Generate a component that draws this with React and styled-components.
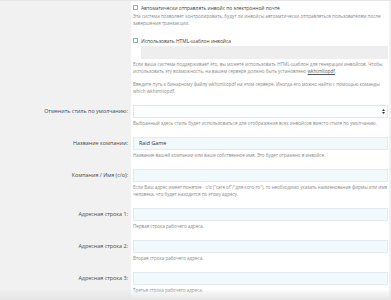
import React from "react";
import styled, { createGlobalStyle } from "styled-components";

const Global = createGlobalStyle`
  html, body { margin: 0; padding: 0; background: #f1f1f1; }
  body { font-family: "Open Sans", "Liberation Sans", sans-serif; overflow: hidden; }
  #root { height: 300px; overflow: hidden; }
`;

const Page = styled.div`
  height: 300px;
  border-top: 1.5px solid #e6e6e6;
  box-sizing: border-box;
  overflow: hidden;
  padding-right: 2px;
`;

const Form = styled.div`
  display: grid;
  grid-template-columns: 131px 1fr;
`;

const LabelCell = styled.div`
  background: #f1f1f1;
  padding-right: 3px;
  text-align: right;
  font-size: 5.4px;
  line-height: 13px;
  color: #4a4a4a;
  white-space: nowrap;
`;

const FieldCell = styled.div`
  background: #fff;
  padding: ${(p) => (p.$first ? "3px" : "0")} 1px 10.5px 2px;
  min-width: 0;
`;

const CheckLine = styled.label`
  display: flex;
  align-items: center;
  gap: 3px;
  height: 7px;
  font-size: 4.9px;
  color: #3c3c3c;
  margin-top: ${(p) => p.$mt || 0}px;
  white-space: nowrap;
`;

const Box = styled.span`
  width: 5px;
  height: 5px;
  box-sizing: border-box;
  border: 0.8px solid #8fb3c0;
  background: #fff;
  flex: none;
`;

const Help = styled.p`
  margin: ${(p) => p.$mt ?? 2}px 0 0 0;
  font-size: 4.58px;
  line-height: 6.7px;
  color: #8a8a8a;
`;

const HelpLine = styled.span`
  display: block;
  white-space: nowrap;
  letter-spacing: -0.04px;
`;

const Link = styled.span`
  color: #555;
  text-decoration: underline;
`;

const Disabled = styled.div`
  margin: 1.5px 0 0 8px;
  height: 13px;
  background: #eeeeee;
`;

const Input = styled.div`
  height: 13px;
  box-sizing: border-box;
  background: #f2f9fc;
  border: 0.6px solid #e3ebef;
  display: flex;
  align-items: center;
  padding: 0 5px;
  font-size: 5.4px;
  color: #333;
  justify-content: space-between;
`;

const SelectBox = styled(Input)`
  background: #fdfeff;
  border-color: #e4e8ea;
  padding-right: 2.5px;
`;

const Fade = styled.div`
  position: fixed;
  left: 0;
  right: 0;
  bottom: 0;
  height: 10px;
  background: linear-gradient(to bottom, rgba(236, 236, 236, 0.2), rgba(228, 228, 228, 0.95));
  pointer-events: none;
`;

const Arrows = () => (
  <svg width="3" height="5" viewBox="0 0 6 10">
    <path d="M3 0 L6 4 H0 Z M3 10 L0 6 H6 Z" fill="#333" />
  </svg>
);

const rows = [
  { label: "Название компании:", value: "Raid Game", help: ["Название вашей компании или ваше собственное имя. Это будет отражено в инвойсе."] },
  {
    label: "Компания / Имя (c/o):",
    value: "",
    help: [
      "Если Ваш адрес имеет понятие - c/o (\"care of\"/\"для кого-то\"), то необходимо указать наименование фирмы или имя",
      "человека, что будет находится по этому адресу.",
    ],
  },
  { label: "Адресная строка 1:", value: "", help: ["Первая строка рабочего адреса."] },
  { label: "Адресная строка 2:", value: "", help: ["Вторая строка рабочего адреса."] },
  { label: "Адресная строка 3:", value: "", help: ["Третья строка рабочего адреса."] },
];

export default function App() {
  return (
    <>
      <Global />
      <Page>
        <Form>
          <LabelCell />
          <FieldCell $first>
            <CheckLine>
              <Box />
              Автоматически отправлять инвойс по электронной почте
            </CheckLine>
            <Help>
              Эта система позволяет контролировать, будут ли инвойсы автоматически отправляться пользователям после
              завершения транзакции.
            </Help>
            <CheckLine $mt={11}>
              <Box />
              Использовать HTML-шаблон инвойса
            </CheckLine>
            <Disabled />
            <Help $mt={2.5}>
              Если ваша система поддерживает это, вы можете использовать HTML-шаблон для генерации инвойсов. Чтобы
              использовать эту возможность, на вашем сервере должно быть установлено <Link>wkhtmltopdf</Link>.
            </Help>
            <Help $mt={6}>
              Введите путь к бинарному файлу wkhtmltopdf на этом сервере. Иногда его можно найти с помощью команды
              which wkhtmltopdf.
            </Help>
          </FieldCell>

          <LabelCell>Отменить стиль по умолчанию:</LabelCell>
          <FieldCell>
            <SelectBox>
              <span />
              <Arrows />
            </SelectBox>
            <Help>Выбранный здесь стиль будет использоваться для отображения всех инвойсов вместо стиля по умолчанию.</Help>
          </FieldCell>

          {rows.map((r) => (
            <React.Fragment key={r.label}>
              <LabelCell>{r.label}</LabelCell>
              <FieldCell>
                <Input>{r.value}</Input>
                <Help>
                  {r.help.map((h) => (
                    <HelpLine key={h}>{h}</HelpLine>
                  ))}
                </Help>
              </FieldCell>
            </React.Fragment>
          ))}
        </Form>
      </Page>
      <Fade />
    </>
  );
}
